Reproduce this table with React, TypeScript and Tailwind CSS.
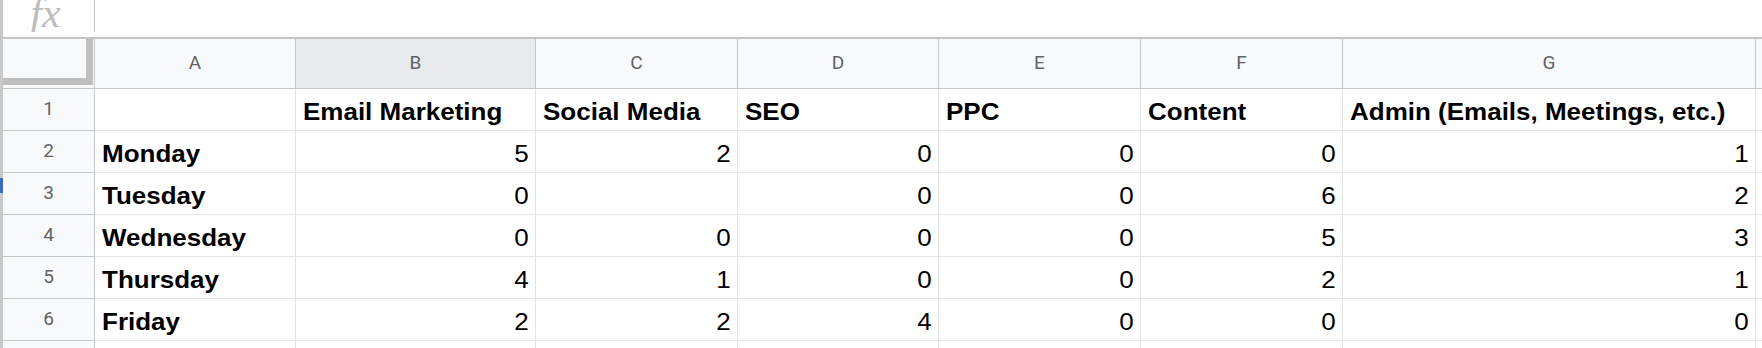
import React from "react";

type Cell = string | number | null;

const columns = [
  { key: "A", width: "w-[201px]" },
  { key: "B", width: "w-[240px]" },
  { key: "C", width: "w-[202px]" },
  { key: "D", width: "w-[201px]" },
  { key: "E", width: "w-[202px]" },
  { key: "F", width: "w-[202px]" },
  { key: "G", width: "w-[413px]" },
];

const rows: Cell[][] = [
  [null, "Email Marketing", "Social Media", "SEO", "PPC", "Content", "Admin (Emails, Meetings, etc.)"],
  ["Monday", 5, 2, 0, 0, 0, 1],
  ["Tuesday", 0, null, 0, 0, 6, 2],
  ["Wednesday", 0, 0, 0, 0, 5, 3],
  ["Thursday", 4, 1, 0, 0, 2, 1],
  ["Friday", 2, 2, 4, 0, 0, 0],
  [null, null, null, null, null, null, null],
];

function GridCell({ value, width }: { value: Cell; width: string }) {
  const isNumber = typeof value === "number";
  return (
    <div
      className={`${width} flex shrink-0 items-end border-r border-b border-[#e2e3e3] pb-[5px] text-[23px] leading-[25px] text-black ${
        isNumber ? "justify-end pr-[6px]" : "justify-start pl-[7px] font-bold"
      }`}
    >
      {value !== null && (
        <span
          className={`inline-block whitespace-nowrap scale-x-[1.13] ${
            isNumber ? "origin-right" : "origin-left"
          }`}
        >
          {value}
        </span>
      )}
    </div>
  );
}

export default function App() {
  return (
    <div className="flex h-[348px] w-[1762px] overflow-hidden bg-white font-['Liberation_Sans',Arial,sans-serif]">
      {/* left edge strip */}
      <div className="flex w-[3px] shrink-0 flex-col bg-[#c8c8c8]">
        <div className="h-[178px]" />
        <div className="h-[15px] bg-[#3b6cb7]" />
      </div>

      <div className="flex min-w-0 flex-1 flex-col">
        {/* formula bar */}
        <div className="flex h-[39px] shrink-0 border-b-2 border-[#c4c4c4]">
          <div className="flex h-[32px] w-[92px] shrink-0 justify-center overflow-hidden border-r border-[#c4c4c4] pr-[6px]">
            <span className="-mt-[8px] font-['Liberation_Serif',serif] text-[42px] leading-none text-[#bdbdbd] italic">
              fx
            </span>
          </div>
        </div>

        {/* column headers */}
        <div className="flex h-[50px] shrink-0 border-b border-[#c4c7c5] bg-[#f8f9fa] font-['Roboto',sans-serif] text-[19px] text-[#5f6368]">
          <div className="w-[92px] shrink-0 border-r border-[#c4c7c5]">
            <div className="h-[46px] w-[90px] border-r-[7px] border-b-[7px] border-[#bfbfbf]" />
          </div>
          {columns.map((col) => (
            <div
              key={col.key}
              className={`${col.width} flex shrink-0 items-center justify-center border-r border-[#c4c7c5] ${
                col.key === "B" ? "bg-[#e8eaed]" : ""
              }`}
            >
              {col.key}
            </div>
          ))}
          <div className="flex-1" />
        </div>

        {/* rows */}
        {rows.map((row, i) => (
          <div key={i} className="flex h-[42px] shrink-0">
            <div className="flex w-[92px] shrink-0 items-center justify-center border-r border-b border-[#c4c7c5] bg-[#f8f9fa] font-['Roboto',sans-serif] text-[19px] text-[#5f6368]">
              {i + 1}
            </div>
            {row.map((value, j) => (
              <GridCell key={j} value={value} width={columns[j].width} />
            ))}
            <div className="flex-1 border-b border-[#e2e3e3]" />
          </div>
        ))}
      </div>
    </div>
  );
}
